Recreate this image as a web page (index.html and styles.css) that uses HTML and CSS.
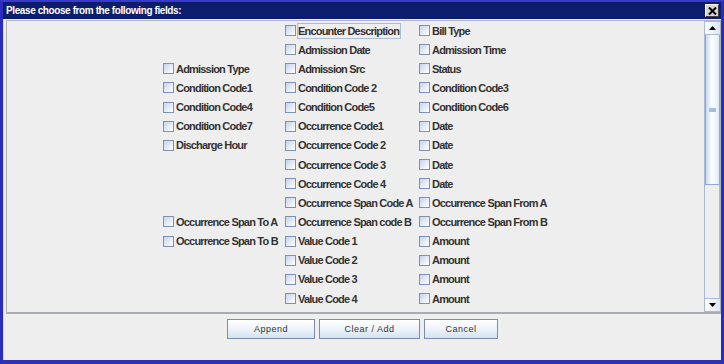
FILE: index.html
```html
<!DOCTYPE html>
<html>
<head>
<meta charset="utf-8">
<link rel="stylesheet" href="styles.css">
</head>
<body>
<div class="window">
  <div class="titlebar">
    <span class="title">Please choose from the following fields:</span>
    <span class="close">
      <svg width="9" height="8" viewBox="0 0 9 8"><path d="M1 0.5 L8 7.5 M8 0.5 L1 7.5" stroke="#000" stroke-width="2"/></svg>
    </span>
  </div>
  <div class="content">
    <div class="scrollpane">
      <div class="viewport">
        <div class="grid">
          <div></div>
          <label class="item"><span class="cb"></span><span class="txt focus">Encounter Description</span></label>
          <label class="item"><span class="cb"></span><span class="txt">Bill Type</span></label>

          <div></div>
          <label class="item"><span class="cb"></span><span class="txt">Admission Date</span></label>
          <label class="item"><span class="cb"></span><span class="txt">Admission Time</span></label>

          <label class="item"><span class="cb"></span><span class="txt">Admission Type</span></label>
          <label class="item"><span class="cb"></span><span class="txt">Admission Src</span></label>
          <label class="item"><span class="cb"></span><span class="txt">Status</span></label>

          <label class="item"><span class="cb"></span><span class="txt">Condition Code1</span></label>
          <label class="item"><span class="cb"></span><span class="txt">Condition Code 2</span></label>
          <label class="item"><span class="cb"></span><span class="txt">Condition Code3</span></label>

          <label class="item"><span class="cb"></span><span class="txt">Condition Code4</span></label>
          <label class="item"><span class="cb"></span><span class="txt">Condition Code5</span></label>
          <label class="item"><span class="cb"></span><span class="txt">Condition Code6</span></label>

          <label class="item"><span class="cb"></span><span class="txt">Condition Code7</span></label>
          <label class="item"><span class="cb"></span><span class="txt">Occurrence Code1</span></label>
          <label class="item"><span class="cb"></span><span class="txt">Date</span></label>

          <label class="item"><span class="cb"></span><span class="txt">Discharge Hour</span></label>
          <label class="item"><span class="cb"></span><span class="txt">Occurrence Code 2</span></label>
          <label class="item"><span class="cb"></span><span class="txt">Date</span></label>

          <div></div>
          <label class="item"><span class="cb"></span><span class="txt">Occurrence Code 3</span></label>
          <label class="item"><span class="cb"></span><span class="txt">Date</span></label>

          <div></div>
          <label class="item"><span class="cb"></span><span class="txt">Occurrence Code 4</span></label>
          <label class="item"><span class="cb"></span><span class="txt">Date</span></label>

          <div></div>
          <label class="item"><span class="cb"></span><span class="txt">Occurrence Span Code A</span></label>
          <label class="item"><span class="cb"></span><span class="txt">Occurrence Span From A</span></label>

          <label class="item"><span class="cb"></span><span class="txt">Occurrence Span To A</span></label>
          <label class="item"><span class="cb"></span><span class="txt">Occurrence Span code B</span></label>
          <label class="item"><span class="cb"></span><span class="txt">Occurrence Span From B</span></label>

          <label class="item"><span class="cb"></span><span class="txt">Occurrence Span To B</span></label>
          <label class="item"><span class="cb"></span><span class="txt">Value Code 1</span></label>
          <label class="item"><span class="cb"></span><span class="txt">Amount</span></label>

          <div></div>
          <label class="item"><span class="cb"></span><span class="txt">Value Code 2</span></label>
          <label class="item"><span class="cb"></span><span class="txt">Amount</span></label>

          <div></div>
          <label class="item"><span class="cb"></span><span class="txt">Value Code 3</span></label>
          <label class="item"><span class="cb"></span><span class="txt">Amount</span></label>

          <div></div>
          <label class="item"><span class="cb"></span><span class="txt">Value Code 4</span></label>
          <label class="item"><span class="cb"></span><span class="txt">Amount</span></label>

          <div></div>
          <div class="item"><span class="cb"></span></div>
          <div class="item"><span class="cb"></span></div>
        </div>
      </div>
      <div class="scrollbar">
        <div class="sb-btn"><svg width="7" height="4" viewBox="0 0 7 4"><path d="M3.5 0 L7 4 L0 4 Z" fill="#000"/></svg></div>
        <div class="sb-thumb"><span class="grip"></span></div>
        <div class="sb-track"></div>
        <div class="sb-btn"><svg width="7" height="4" viewBox="0 0 7 4"><path d="M0 0 L7 0 L3.5 4 Z" fill="#000"/></svg></div>
      </div>
    </div>
    <div class="buttons">
      <button class="btn btn-append">Append</button>
      <button class="btn btn-clear">Clear / Add</button>
      <button class="btn btn-cancel">Cancel</button>
    </div>
  </div>
</div>
</body>
</html>
```
FILE: styles.css
```css
html, body {
  margin: 0;
  padding: 0;
  width: 724px;
  height: 364px;
  overflow: hidden;
  background: #eeeeee;
}
.window {
  width: 724px;
  height: 364px;
  box-sizing: border-box;
  border-left: 3px solid #2b2bbd;
  border-right: 3px solid #2b2bbd;
  border-top: 2px solid #3a3ac8;
  border-bottom: 4px solid #3030b0;
  display: flex;
  flex-direction: column;
  background: #eeeeee;
}
.titlebar {
  height: 17px;
  background: #0c1d6e;
  display: flex;
  align-items: center;
  justify-content: space-between;
  padding: 0 2px 0 3px;
  flex: none;
}
.title {
  color: #ffffff;
  font-family: "Liberation Sans", Arial, sans-serif;
  font-weight: bold;
  font-size: 10px;
  letter-spacing: -0.4px;
}
.close {
  width: 14px;
  height: 13px;
  box-sizing: border-box;
  background: #d8d6d0;
  border: 1px solid;
  border-color: #ffffff #404040 #404040 #ffffff;
  display: flex;
  align-items: center;
  justify-content: center;
}
.content {
  flex: 1;
  display: flex;
  flex-direction: column;
  padding: 1px 0 0 2px;
  border-left: 1px solid #d8d8e0;
}
.scrollpane {
  height: 294px;
  box-sizing: border-box;
  border: 1px solid #b0b4bc;
  border-bottom: 2px solid #a8acb4;
  display: flex;
  background: #eeeeee;
}
.viewport {
  flex: 1;
  overflow: hidden;
  padding-left: 156px;
}
.grid {
  display: grid;
  grid-template-columns: 122px 134px auto;
  grid-auto-rows: 19.15px;
}
.item {
  display: flex;
  align-items: center;
  white-space: nowrap;
}
.cb {
  width: 11px;
  height: 11px;
  box-sizing: border-box;
  border: 1px solid #7f91b0;
  background: linear-gradient(135deg, #c4d3ea 0%, #e9eff8 60%, #ffffff 100%);
  margin-right: 1px;
  flex: none;
}
.txt {
  font-family: "Liberation Sans", Arial, sans-serif;
  font-weight: bold;
  font-size: 11px;
  letter-spacing: -0.8px;
  color: #333333;
  padding: 1px 1px 1px 0;
  border: 1px solid transparent;
}
.txt.focus {
  border-color: #a8bfdc;
}
.scrollbar {
  width: 15px;
  display: flex;
  flex-direction: column;
  border-left: 1px solid #a9b9d6;
  background: #eeeeee;
}
.sb-btn {
  height: 14px;
  flex: none;
  box-sizing: border-box;
  border-bottom: 1px solid #a9b9d6;
  border-top: 1px solid #a9b9d6;
  background: linear-gradient(to right, #ffffff, #dce6f2);
  display: flex;
  align-items: center;
  justify-content: center;
}
.sb-thumb {
  height: 150px;
  flex: none;
  box-sizing: border-box;
  border: 1px solid #8fa8d0;
  border-top: none;
  background: linear-gradient(to right, #c9d9f0, #ffffff 45%, #e2ebf7);
  display: flex;
  align-items: center;
  justify-content: center;
}
.grip {
  width: 7px;
  height: 4px;
  background: #a9bde0;
}
.sb-track {
  flex: 1;
  border-right: 1px solid #a9b9d6;
}
.buttons {
  display: flex;
  justify-content: center;
  gap: 4px;
  margin-top: 5px;
  margin-left: -2px;
}
.btn {
  height: 20px;
  box-sizing: border-box;
  border: 1px solid #7a8db0;
  background: linear-gradient(to bottom, #ffffff 0%, #eef3fa 50%, #d5e1f0 100%);
  font-family: "Liberation Sans", Arial, sans-serif;
  font-size: 9px;
  line-height: 18px;
  letter-spacing: 0.5px;
  color: #333333;
  padding: 0;
  overflow: visible;
}
.btn-append { width: 88px; }
.btn-clear { width: 101px; }
.btn-cancel { width: 74px; }
```
